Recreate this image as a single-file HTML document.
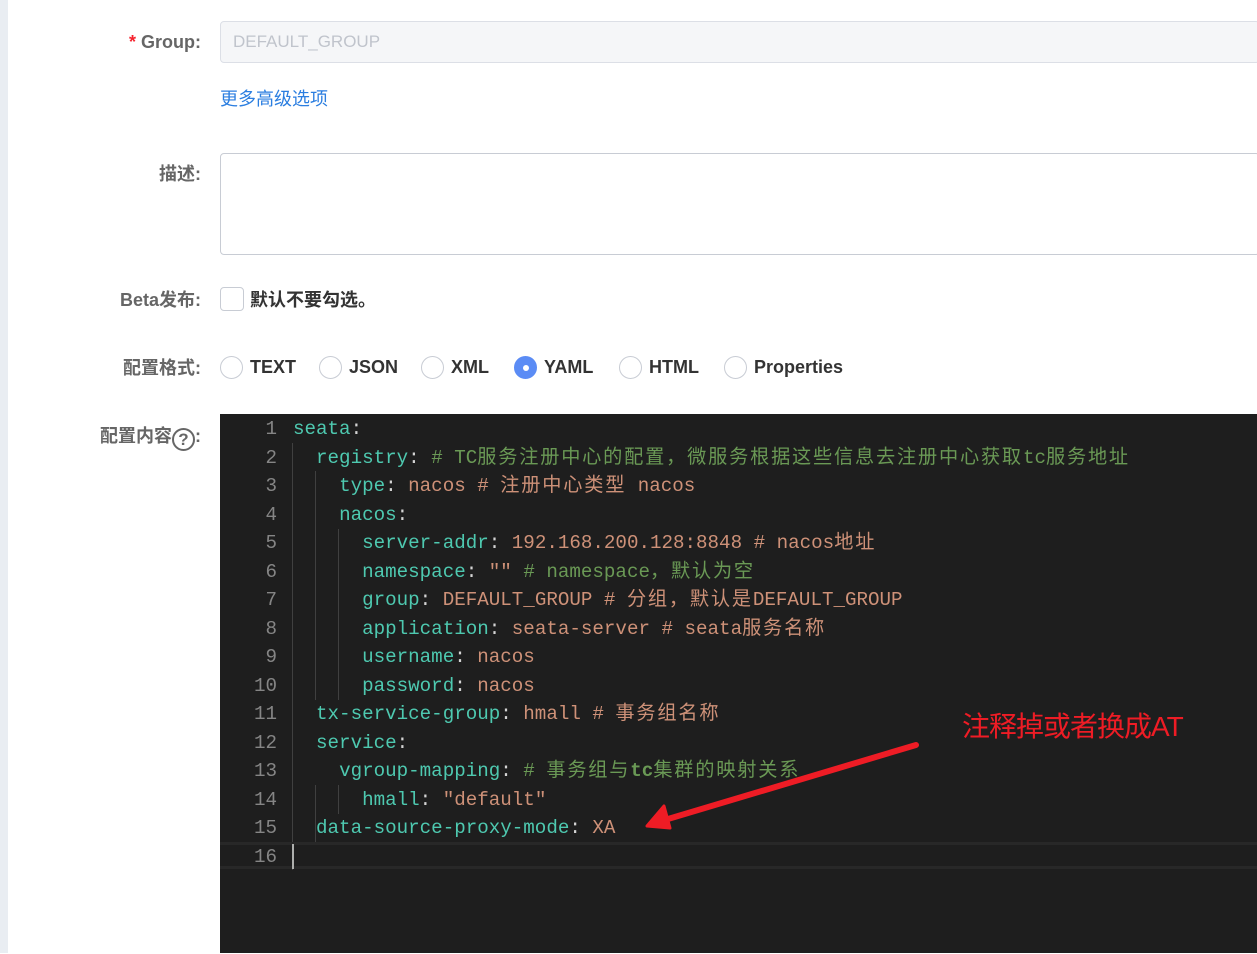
<!DOCTYPE html><html><head><meta charset="utf-8"><style>
body{margin:0;width:1257px;height:953px;overflow:hidden;background:#fff;font-family:"Liberation Sans","Noto Sans CJK SC",sans-serif;position:relative}
.strip{position:absolute;left:0;top:0;width:8px;height:953px;background:#e9edf2}
.lab{position:absolute;right:1056px;font-size:18px;line-height:20px;font-weight:bold;color:#666;white-space:nowrap}
.inp{position:absolute;left:220px;width:1040px;border:1px solid #dcdfe6;border-radius:4px;box-sizing:border-box}
.radio{position:absolute;top:356px;width:23px;height:23px;border:1px solid #c8ccd4;border-radius:50%;box-sizing:border-box}
.rt{position:absolute;top:357px;font-size:18px;line-height:20px;font-weight:bold;color:#333}
.code{position:absolute;left:220px;top:414px;width:1037px;height:539px;background:#1e1e1e}
.ln{position:absolute;left:0;width:57px;text-align:right;color:#858585;font:19.2px/24px "Liberation Mono",monospace}
.l{position:absolute;left:73px;white-space:pre;font:19.2px/24px "Liberation Mono","Noto Sans CJK SC",monospace;color:#d4d4d4}
.k{color:#4ec9b0}.s{color:#ce9178}.c{color:#6a9955}
i{font-style:normal;letter-spacing:1.8px}
.g{position:absolute;width:1px;background:#404040}
.w{position:absolute;left:0;top:1px;width:1037px;height:539px}
</style></head><body>
<div class="strip"></div>
<div class="lab" style="top:32px"><span style="color:#f5222d">*</span> Group:</div>
<div class="inp" style="top:21px;height:42px;background:#f5f6f8"><span style="position:absolute;left:12px;top:10px;font-size:17px;color:#c0c4cc">DEFAULT_GROUP</span></div>
<div style="position:absolute;left:220px;top:88px;font-size:18px;line-height:22px;color:#2b7ee0">更多高级选项</div>
<div class="lab" style="top:164px">描述:</div>
<div class="inp" style="top:153px;height:102px;border-color:#c8ccd4"></div>
<div class="lab" style="top:290px">Beta发布:</div>
<div style="position:absolute;left:220px;top:287px;width:24px;height:24px;border:1px solid #c8ccd4;border-radius:4px;box-sizing:border-box"></div>
<div class="rt" style="left:250px;top:290px">默认不要勾选。</div>
<div class="lab" style="top:358px">配置格式:</div>
<div class="radio" style="left:220px"></div><div class="rt" style="left:250px">TEXT</div>
<div class="radio" style="left:319px"></div><div class="rt" style="left:349px">JSON</div>
<div class="radio" style="left:421px"></div><div class="rt" style="left:451px">XML</div>
<div class="radio" style="left:514px;background:#5b8cf5;border-color:#5b8cf5"><div style="position:absolute;left:7.5px;top:7.5px;width:6px;height:6px;background:#fff;border-radius:50%"></div></div><div class="rt" style="left:544px">YAML</div>
<div class="radio" style="left:619px"></div><div class="rt" style="left:649px">HTML</div>
<div class="radio" style="left:724px"></div><div class="rt" style="left:754px">Properties</div>
<div class="lab" style="top:426px">配置内容<span style="display:inline-block;width:23px;height:23px;border:2px solid #666;border-radius:50%;font-size:17px;line-height:19px;text-align:center;vertical-align:-3px;box-sizing:border-box">?</span>:</div>
<div class="code">
<div class="g" style="left:72px;top:29px;height:427px"></div>
<div class="g" style="left:95px;top:57px;height:229px"></div>
<div class="g" style="left:118px;top:115px;height:171px"></div>
<div class="g" style="left:95px;top:371px;height:57px"></div>
<div class="g" style="left:118px;top:371px;height:29px"></div>
<div style="position:absolute;left:0;top:428px;width:1037px;height:27px;border-top:3px solid #282828;border-bottom:3px solid #282828;box-sizing:border-box;"></div>
<div style="position:absolute;left:72px;top:430px;width:2px;height:25px;background:#aeafad"></div>
<div class="w">
<div class="ln" style="top:2px">1</div><div class="l" style="top:2px"><span class="k">seata</span>:</div>
<div class="ln" style="top:30.5px">2</div><div class="l" style="top:30.5px">  <span class="k">registry</span>: <span class="c"># TC<i>服务注册中心的配置，微服务根据这些信息去注册中心获取</i>tc<i>服务地址</i></span></div>
<div class="ln" style="top:59px">3</div><div class="l" style="top:59px">    <span class="k">type</span>: <span class="s">nacos # <i>注册中心类型</i> nacos</span></div>
<div class="ln" style="top:87.5px">4</div><div class="l" style="top:87.5px">    <span class="k">nacos</span>:</div>
<div class="ln" style="top:116px">5</div><div class="l" style="top:116px">      <span class="k">server-addr</span>: <span class="s">192.168.200.128:8848 # nacos<i>地址</i></span></div>
<div class="ln" style="top:144.5px">6</div><div class="l" style="top:144.5px">      <span class="k">namespace</span>: <span class="s">""</span> <span class="c"># namespace<i>，默认为空</i></span></div>
<div class="ln" style="top:173px">7</div><div class="l" style="top:173px">      <span class="k">group</span>: <span class="s">DEFAULT_GROUP # <i>分组，默认是</i>DEFAULT_GROUP</span></div>
<div class="ln" style="top:201.5px">8</div><div class="l" style="top:201.5px">      <span class="k">application</span>: <span class="s">seata-server # seata<i>服务名称</i></span></div>
<div class="ln" style="top:230px">9</div><div class="l" style="top:230px">      <span class="k">username</span>: <span class="s">nacos</span></div>
<div class="ln" style="top:258.5px">10</div><div class="l" style="top:258.5px">      <span class="k">password</span>: <span class="s">nacos</span></div>
<div class="ln" style="top:287px">11</div><div class="l" style="top:287px">  <span class="k">tx-service-group</span>: <span class="s">hmall # <i>事务组名称</i></span></div>
<div class="ln" style="top:315.5px">12</div><div class="l" style="top:315.5px">  <span class="k">service</span>:</div>
<div class="ln" style="top:344px">13</div><div class="l" style="top:344px">    <span class="k">vgroup-mapping</span>: <span class="c"># <i>事务组与</i><b>tc</b><i>集群的映射关系</i></span></div>
<div class="ln" style="top:372.5px">14</div><div class="l" style="top:372.5px">      <span class="k">hmall</span>: <span class="s">"default"</span></div>
<div class="ln" style="top:401px">15</div><div class="l" style="top:401px">  <span class="k">data-source-proxy-mode</span>: <span class="s">XA</span></div>
<div class="ln" style="top:429.5px">16</div>
</div>
</div>
<svg style="position:absolute;left:0;top:0" width="1257" height="953"><line x1="916" y1="745" x2="668" y2="819" stroke="#ee1c25" stroke-width="6" stroke-linecap="round"/><polygon points="647,826 664,806 670,828" fill="#ee1c25" stroke="#ee1c25" stroke-width="3" stroke-linejoin="round"/></svg>
<div style="position:absolute;left:962px;top:710px;font-size:28px;line-height:34px;color:#ee1c25;letter-spacing:-1px">注释掉或者换成AT</div>
</body></html>
